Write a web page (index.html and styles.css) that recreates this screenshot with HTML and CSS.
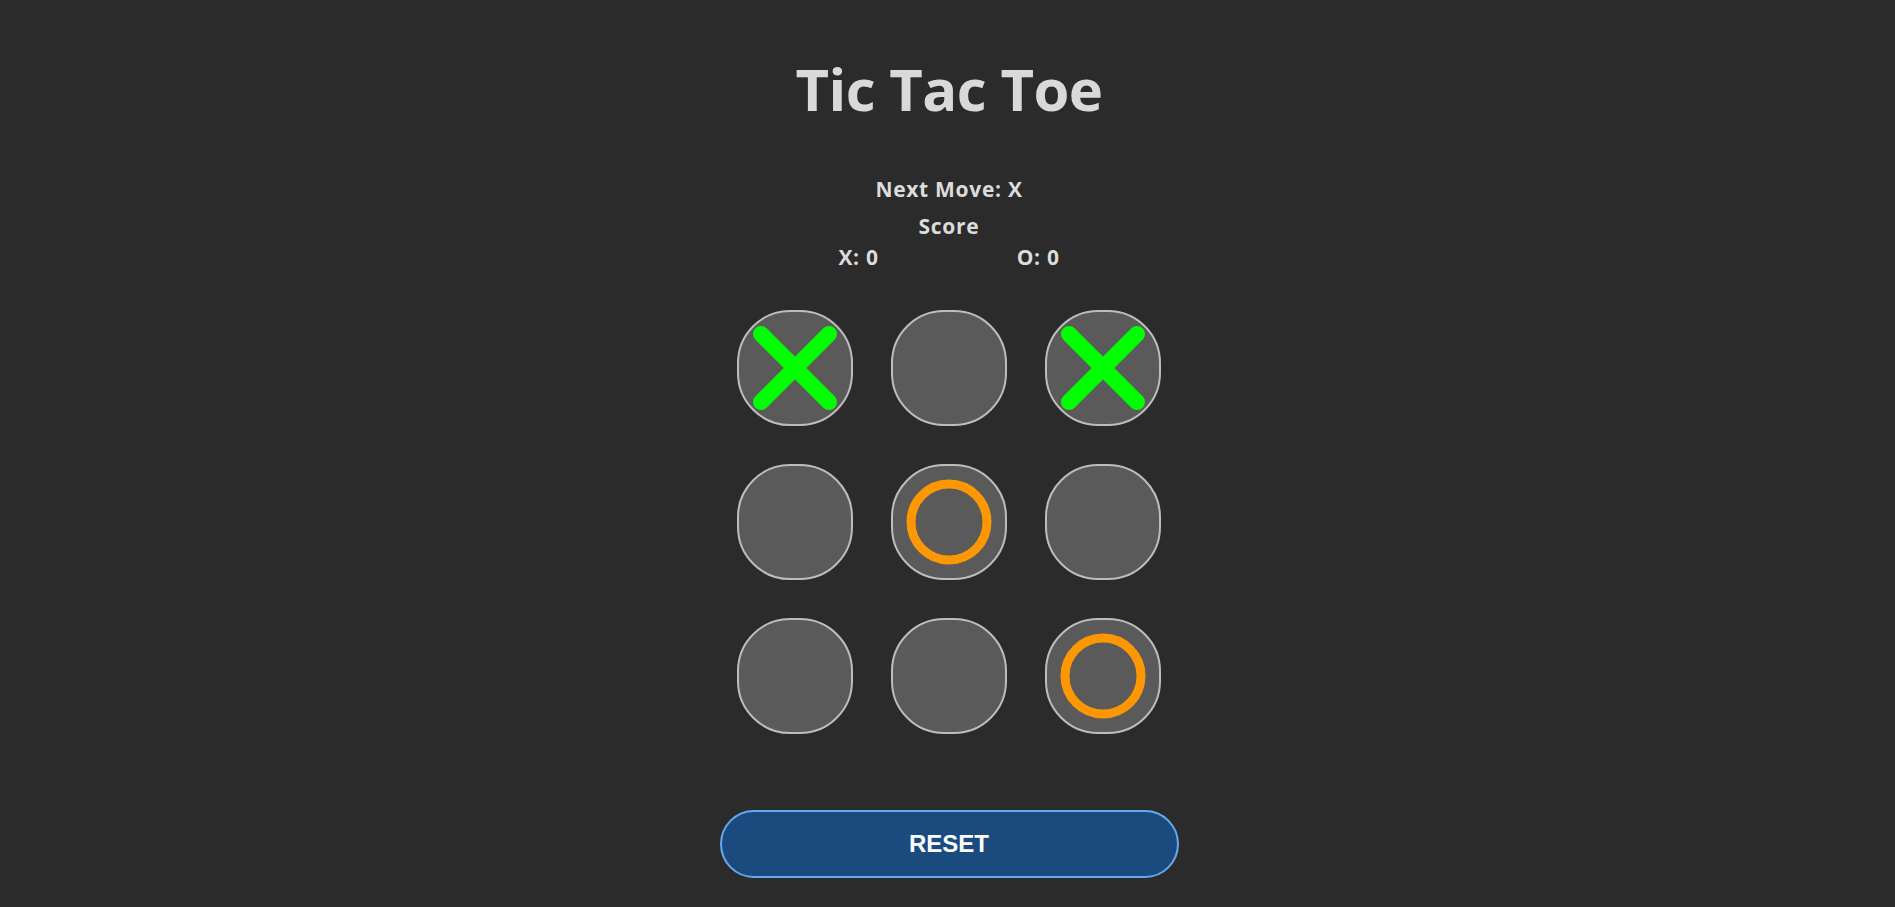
FILE: index.html
```html
<!DOCTYPE html>
<html lang="en">
<head>
<meta charset="utf-8">
<title>Tic Tac Toe</title>
<link rel="stylesheet" href="styles.css">
</head>
<body>
<main class="app">
  <h1 class="title">Tic Tac Toe</h1>
  <div class="status">
    <div class="next">Next Move: X</div>
    <div class="score-label">Score</div>
    <div class="scores">
      <span class="score">X: 0</span>
      <span class="score">O: 0</span>
    </div>
  </div>
  <div class="board">
    <div class="cell">
      <svg class="mark-x" viewBox="0 0 84 84" width="84" height="84"><path d="M8 8L76 76M76 8L8 76"/></svg>
    </div>
    <div class="cell"></div>
    <div class="cell">
      <svg class="mark-x" viewBox="0 0 84 84" width="84" height="84"><path d="M8 8L76 76M76 8L8 76"/></svg>
    </div>
    <div class="cell"></div>
    <div class="cell">
      <svg class="mark-o" viewBox="0 0 86 86" width="86" height="86"><circle cx="43" cy="43" r="38"/></svg>
    </div>
    <div class="cell"></div>
    <div class="cell"></div>
    <div class="cell"></div>
    <div class="cell">
      <svg class="mark-o" viewBox="0 0 86 86" width="86" height="86"><circle cx="43" cy="43" r="38"/></svg>
    </div>
  </div>
  <button class="reset" type="button">RESET</button>
</main>
</body>
</html>
```
FILE: styles.css
```css
html, body {
  margin: 0;
  padding: 0;
  background: #2b2b2b;
}
body {
  font-family: "Open Sans", "Noto Sans", sans-serif;
  color: #dcdcdc;
  min-height: 907px;
}
.app {
  display: flex;
  flex-direction: column;
  align-items: center;
  padding-left: 3px;
}
.title {
  margin: 54px 0 0;
  font-size: 58px;
  line-height: 70px;
  font-weight: 700;
  letter-spacing: -0.6px;
  color: #d9d9d9;
}
.status {
  margin-top: 50px;
  display: flex;
  flex-direction: column;
  align-items: center;
  font-size: 21px;
  font-weight: 700;
  line-height: 30px;
  letter-spacing: 0.7px;
}
.score-label {
  margin-top: 7px;
}
.scores {
  margin-top: 1px;
  display: flex;
  gap: 138px;
}
.board {
  margin-top: 38px;
  display: grid;
  grid-template-columns: repeat(3, 116px);
  grid-auto-rows: 116px;
  gap: 38px;
}
.cell {
  box-sizing: border-box;
  border: 2px solid #bdbdbd;
  border-radius: 53px;
  background: #5a5a5a;
  display: flex;
  align-items: center;
  justify-content: center;
}
.mark-x path {
  stroke: #00ff00;
  stroke-width: 16;
  stroke-linecap: round;
  fill: none;
}
.mark-o circle {
  stroke: #ff9800;
  stroke-width: 9;
  fill: none;
}
.reset {
  margin-top: 76px;
  box-sizing: border-box;
  width: 459px;
  height: 68px;
  border: 2px solid #64aaf0;
  border-radius: 34px;
  background: #1b4a7e;
  color: #ffffff;
  font-family: "Liberation Sans", Arial, sans-serif;
  font-weight: 700;
  font-size: 24px;
  cursor: pointer;
}
```
